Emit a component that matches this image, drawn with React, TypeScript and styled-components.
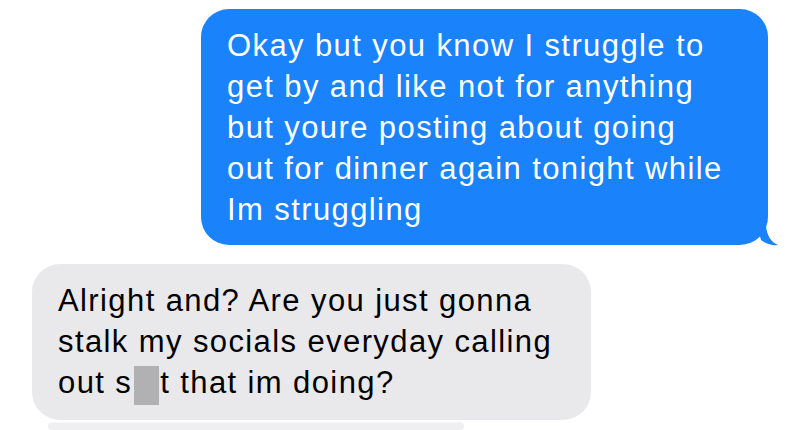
import React from "react";
import styled, { createGlobalStyle } from "styled-components";

const GlobalStyle = createGlobalStyle`
  html, body {
    margin: 0;
    padding: 0;
    background: #ffffff;
    overflow: hidden;
  }
  body {
    font-family: "Liberation Sans", Arial, sans-serif;
  }
`;

const Thread = styled.div`
  width: 800px;
  height: 430px;
  overflow: hidden;
  display: flex;
  flex-direction: column;
  padding-top: 9px;
  box-sizing: border-box;
`;

const Row = styled.div<{ $mine?: boolean }>`
  display: flex;
  justify-content: ${(p) => (p.$mine ? "flex-end" : "flex-start")};
  padding: ${(p) => (p.$mine ? "0 32px 0 0" : "0 0 0 32px")};
  margin-bottom: ${(p) => (p.$mine ? "19px" : "3px")};
`;

const Bubble = styled.div<{ $mine?: boolean; $width: number }>`
  position: relative;
  width: ${(p) => p.$width}px;
  box-sizing: border-box;
  padding: 16px 0 15px 26px;
  border-radius: 28px;
  background: ${(p) => (p.$mine ? "#1a82fb" : "#e9e9eb")};
  color: ${(p) => (p.$mine ? "#ffffff" : "#000000")};
  font-family: "Liberation Sans", Arial, sans-serif;
  font-size: 31px;
  line-height: 41px;
  letter-spacing: 1.4px;
`;

const Tail = styled.svg`
  position: absolute;
  right: -11px;
  bottom: -1px;
`;

const Line = styled.div`
  white-space: nowrap;
`;

const Censor = styled.span`
  display: inline-block;
  width: 25px;
  height: 39px;
  margin: 0 1px 0 2px;
  background: #b1b1b3;
  vertical-align: -12px;
`;

const Peek = styled.div`
  margin-left: 48px;
  width: 416px;
  height: 40px;
  border-radius: 28px;
  background: #efeff1;
  box-shadow: 0 -1px 2px rgba(0, 0, 0, 0.04);
`;

const sent = [
  "Okay but you know I struggle to",
  "get by and like not for anything",
  "but youre posting about going",
  "out for dinner again tonight while",
  "Im struggling",
];

export default function App() {
  return (
    <>
      <GlobalStyle />
      <Thread>
        <Row $mine>
          <Bubble $mine $width={567}>
            {sent.map((l) => (
              <Line key={l}>{l}</Line>
            ))}
            <Tail width="22" height="20" viewBox="0 0 22 20">
              <path d="M0 0 L9 0 C10 10 14 16 21 19 C14 20 8 17 4 14 Z" fill="#1a82fb" />
            </Tail>
          </Bubble>
        </Row>
        <Row>
          <Bubble $width={559}>
            <Line>Alright and? Are you just gonna</Line>
            <Line>stalk my socials everyday calling</Line>
            <Line>
              out s<Censor />t that im doing?
            </Line>
          </Bubble>
        </Row>
        <Peek />
      </Thread>
    </>
  );
}
